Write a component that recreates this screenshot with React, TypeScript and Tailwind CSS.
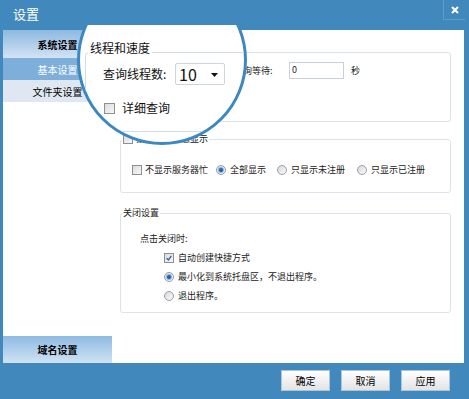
import type { ReactNode } from 'react'

function Checkbox({ checked = false, size = 10 }: { checked?: boolean; size?: number }) {
  return (
    <span
      className="relative inline-block shrink-0 border border-[#8e8f8f] bg-gradient-to-br from-[#dcdcdc] to-[#f7f7f7]"
      style={{ width: size, height: size }}
    >
      {checked && (
        <svg viewBox="0 0 10 10" className="absolute inset-0 h-full w-full">
          <path d="M2 5.2 L4.2 7.4 L8 2.4" fill="none" stroke="#2a5fa5" strokeWidth="1.6" />
        </svg>
      )}
    </span>
  )
}

function Radio({ checked = false }: { checked?: boolean }) {
  return (
    <span className="flex h-[10px] w-[10px] shrink-0 items-center justify-center rounded-full border border-[#979ea6] bg-gradient-to-br from-[#d8d8d8] to-[#fafafa]">
      {checked && <span className="h-[4px] w-[4px] rounded-full bg-[#1f63b0] ring-1 ring-[#8fb7e0]" />}
    </span>
  )
}

function Box({ legend, className, children }: { legend: ReactNode; className: string; children?: ReactNode }) {
  return (
    <div className={`relative rounded-[3px] border border-[#dbe2ea] ${className}`}>
      <div className="absolute left-[1px] top-[-7px] flex items-center bg-white px-[1px] text-[9px] leading-[12px] text-[#222]">
        {legend}
      </div>
      {children}
    </div>
  )
}

function Btn({ label }: { label: string }) {
  return (
    <button className="h-[21px] w-[49px] border border-[#aec4d8] bg-gradient-to-b from-white to-[#e3e3e3] text-[10px] text-black">
      {label}
    </button>
  )
}

export default function App() {
  return (
    <div className="relative h-[399px] w-[469px] overflow-hidden bg-[#4188bc] font-['Noto_Sans_CJK_SC',sans-serif]">
      {/* title bar */}
      <div className="flex h-[30px] items-start justify-between">
        <div className="pl-[13px] pt-[6px] text-[13px] leading-[16px] text-white">设置</div>
        <div className="mr-[4px] flex h-[20px] w-[22px] items-center justify-center border-b border-l border-[#5d9bcb]">
          <svg viewBox="0 0 8 8" className="h-[8px] w-[8px]">
            <path d="M1 1 L7 7 M7 1 L1 7" stroke="white" strokeWidth="2" />
          </svg>
        </div>
      </div>

      {/* content panel */}
      <div className="ml-[3px] flex h-[333px] w-[461px] bg-white">
        <div className="flex w-[109px] flex-col text-[10px]">
          <div className="flex h-[28px] items-center justify-center bg-gradient-to-b from-[#8db9e1] to-[#d3e3f4] font-bold text-black">
            系统设置
          </div>
          <div className="flex h-[22px] items-center justify-center bg-[#7eafdb] text-white">基本设置</div>
          <div className="flex h-[22px] items-center justify-center bg-[#dfe8f2] text-black">文件夹设置</div>
          <div className="flex-1" />
          <div className="flex h-[27px] items-center justify-center bg-gradient-to-b from-[#8ebbe2] to-[#d0e2f4] font-bold text-black">
            域名设置
          </div>
        </div>

        <div className="flex-1 pl-[8px] pr-[13px] pt-[22px] text-[9px] leading-[12px] text-[#222]">
          {/* this part sits under the magnifier; only its right end shows */}
          <Box legend={<span className="invisible">线程和速度</span>} className="h-[70px]">
            <div className="mt-[9px] flex h-[17px] items-center pl-[7px]">
              <span className="invisible w-[52px]">查询线程数:</span>
              <span className="invisible ml-[2px] h-[17px] w-[40px]" />
              <span className="ml-[12px] w-[50px]">查询等待:</span>
              <span className="ml-[5px] flex h-[17px] w-[55px] items-start border border-[#c7cfd8] pl-[2px] pt-[1px]">0</span>
              <span className="ml-[7px]">秒</span>
            </div>
          </Box>

          <Box
            legend={
              <>
                <Checkbox />
                <span className="ml-[3px]">按服务器状态显示</span>
              </>
            }
            className="mt-[17px] h-[54px]"
          >
            <div className="mt-[24px] flex h-[12px] items-center pl-[11px]">
              <Checkbox />
              <span className="ml-[3px]">不显示服务器忙</span>
              <span className="ml-[8px]">
                <Radio checked />
              </span>
              <span className="ml-[4px]">全部显示</span>
              <span className="ml-[11px]">
                <Radio />
              </span>
              <span className="ml-[4px]">只显示未注册</span>
              <span className="ml-[12px]">
                <Radio />
              </span>
              <span className="ml-[4px]">只显示已注册</span>
            </div>
          </Box>

          <Box legend="关闭设置" className="mt-[20px] h-[100px]">
            <div className="mt-[15px] flex h-[19px] items-center pl-[19px]">点击关闭时:</div>
            <div className="flex h-[19px] items-center pl-[43px]">
              <Checkbox checked />
              <span className="ml-[4px]">自动创建快捷方式</span>
            </div>
            <div className="flex h-[19px] items-center pl-[43px]">
              <Radio checked />
              <span className="ml-[4px]">最小化到系统托盘区，不退出程序。</span>
            </div>
            <div className="flex h-[19px] items-center pl-[43px]">
              <Radio />
              <span className="ml-[4px]">退出程序。</span>
            </div>
          </Box>
        </div>
      </div>

      {/* buttons */}
      <div className="mt-[7px] flex justify-end gap-[11px] pr-[19px]">
        <Btn label="确定" />
        <Btn label="取消" />
        <Btn label="应用" />
      </div>

      {/* magnifier callout */}
      <div className="pointer-events-none absolute left-0 top-[25px] h-[374px] w-[469px] overflow-hidden">
        <div className="absolute left-[77px] top-[-50px] h-[170px] w-[170px] overflow-hidden rounded-full border-[3px] border-[#3c88c2] bg-white text-[12px] leading-[14px] text-[#111]">
          <div className="absolute left-[5px] top-[74px] h-[200px] w-[300px] rounded-[4px] border border-[#d3dbe4]" />
          <div className="absolute left-[8px] top-[63px] bg-white px-[2px]">线程和速度</div>
          <div className="absolute left-[23px] top-[85px] flex h-[22px] items-center">
            <span className="w-[72px]">查询线程数:</span>
            <span className="relative flex h-[22px] w-[50px] items-center rounded-[2px] border border-[#ccd5de] pl-[3px] text-[16px]">
              10
              <svg viewBox="0 0 7 4" className="absolute right-[6px] top-[9px] h-[4px] w-[7px]">
                <path d="M0 0 H7 L3.5 4 Z" fill="#111" />
              </svg>
            </span>
          </div>
          <div className="absolute left-[24px] top-[124px]">
            <Checkbox size={11} />
          </div>
          <div className="absolute left-[42px] top-[123px]">详细查询</div>
          <div className="absolute left-[39px] top-[153px] h-[60px] w-[200px] rounded-[3px] border border-[#d3dbe4]" />
        </div>
      </div>
    </div>
  )
}
